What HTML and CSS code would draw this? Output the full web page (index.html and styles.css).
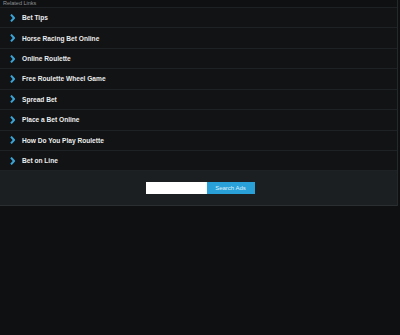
FILE: index.html
```html
<!DOCTYPE html>
<html lang="en">
<head>
    <meta charset="UTF-8">
    <title>Related Links</title>
    <link rel="stylesheet" href="styles.css">
</head>
<body>
    <div class="links-box">
        <div class="links-title">Related Links</div>
        <ul class="links">
            <li><a href="#"><svg class="chev" viewBox="0 0 5 8"><path d="M1 0.6 L4 4 L1 7.4"/></svg>Bet Tips</a></li>
            <li><a href="#"><svg class="chev" viewBox="0 0 5 8"><path d="M1 0.6 L4 4 L1 7.4"/></svg>Horse Racing Bet Online</a></li>
            <li><a href="#"><svg class="chev" viewBox="0 0 5 8"><path d="M1 0.6 L4 4 L1 7.4"/></svg>Online Roulette</a></li>
            <li><a href="#"><svg class="chev" viewBox="0 0 5 8"><path d="M1 0.6 L4 4 L1 7.4"/></svg>Free Roulette Wheel Game</a></li>
            <li><a href="#"><svg class="chev" viewBox="0 0 5 8"><path d="M1 0.6 L4 4 L1 7.4"/></svg>Spread Bet</a></li>
            <li><a href="#"><svg class="chev" viewBox="0 0 5 8"><path d="M1 0.6 L4 4 L1 7.4"/></svg>Place a Bet Online</a></li>
            <li><a href="#"><svg class="chev" viewBox="0 0 5 8"><path d="M1 0.6 L4 4 L1 7.4"/></svg>How Do You Play Roulette</a></li>
            <li><a href="#"><svg class="chev" viewBox="0 0 5 8"><path d="M1 0.6 L4 4 L1 7.4"/></svg>Bet on Line</a></li>
        </ul>
        <form class="search">
            <input type="text" class="search-input">
            <button type="submit" class="search-btn">Search Ads</button>
        </form>
    </div>
</body>
</html>
```

FILE: styles.css
```css
* {
    margin: 0;
    padding: 0;
    box-sizing: border-box;
}

body {
    background: #0f1012;
    font-family: "Liberation Sans", Arial, sans-serif;
    color: #fff;
}

.links-box {
    width: 398px;
    border-right: 1px solid #25292c;
}

.links-title {
    height: 8px;
    font-size: 5.5px;
    color: #8e9296;
    line-height: 7px;
    padding-left: 3px;
    border-bottom: 1px solid #1e2124;
}

.links {
    list-style: none;
    background: #111315;
}

.links li {
    height: 20.43px;
    border-bottom: 1px solid #1f2225;
}

.links a {
    display: flex;
    align-items: center;
    height: 100%;
    padding-left: 10px;
    color: #ececec;
    text-decoration: none;
    font-size: 6.6px;
    font-weight: bold;
}

.chev {
    width: 5px;
    height: 8px;
    margin-right: 7px;
    fill: none;
    stroke: #3ba3d6;
    stroke-width: 2;
}

.search {
    display: flex;
    justify-content: center;
    align-items: center;
    height: 35px;
    padding-left: 3px;
    background: #1b1f21;
    border-bottom: 1px solid #2a2e31;
}

.search-input {
    width: 61px;
    height: 12px;
    border: none;
    background: #fff;
}

.search-btn {
    width: 48px;
    height: 12px;
    border: none;
    background: #29a0d8;
    color: #dff1fb;
    font-family: "Liberation Sans", Arial, sans-serif;
    font-size: 6px;
}
```
